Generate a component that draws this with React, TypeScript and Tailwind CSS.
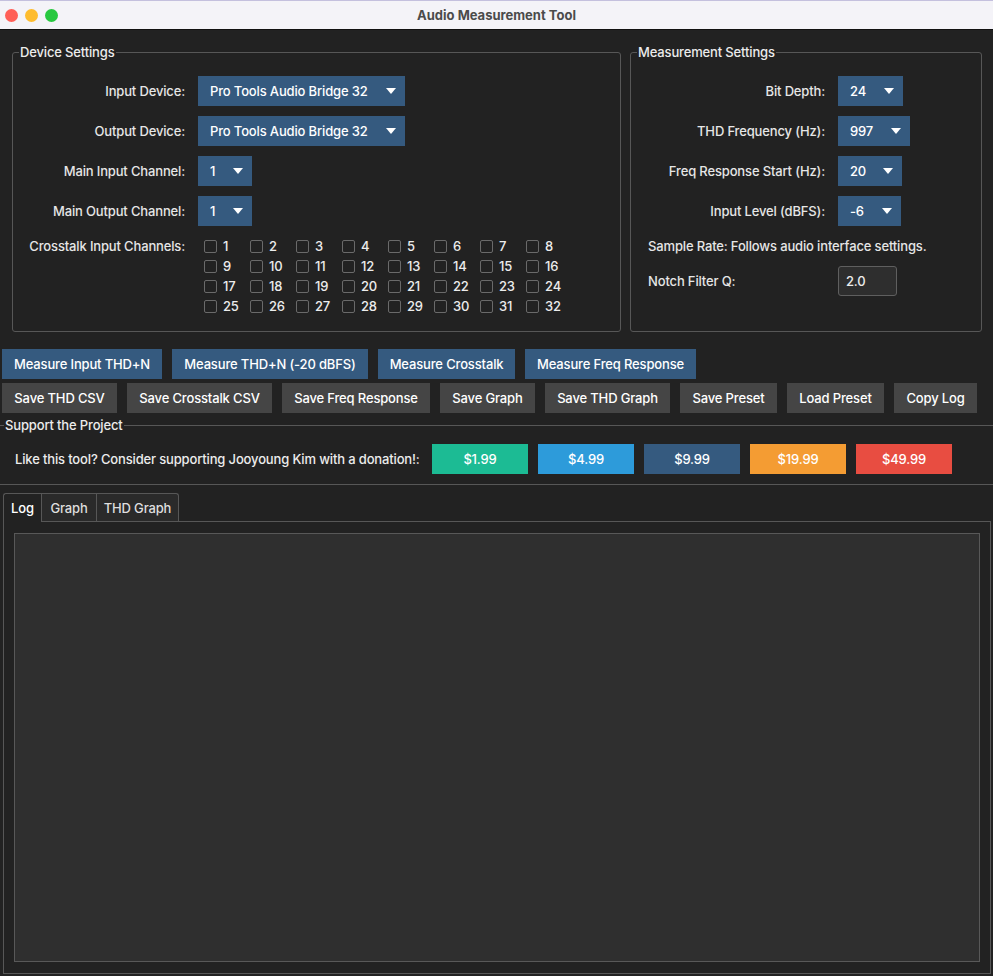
import React from 'react';

const FONT = "font-['Inter','Noto_Sans',sans-serif]";

const measureButtons = [
    { label: 'Measure Input THD+N', w: 'w-[160px]' },
    { label: 'Measure THD+N (-20 dBFS)', w: 'w-[196px]' },
    { label: 'Measure Crosstalk', w: 'w-[137px]' },
    { label: 'Measure Freq Response', w: 'w-[171px]' },
];

const fileButtons = [
    { label: 'Save THD CSV', w: 'w-[115px]' },
    { label: 'Save Crosstalk CSV', w: 'w-[145px]' },
    { label: 'Save Freq Response', w: 'w-[148px]' },
    { label: 'Save Graph', w: 'w-[95px]' },
    { label: 'Save THD Graph', w: 'w-[125px]' },
    { label: 'Save Preset', w: 'w-[97px]' },
    { label: 'Load Preset', w: 'w-[97px]' },
    { label: 'Copy Log', w: 'w-[83px]' },
];

const donations = [
    { label: '$1.99', color: 'bg-[#1cbb94]' },
    { label: '$4.99', color: 'bg-[#2d9bda]' },
    { label: '$9.99', color: 'bg-[#355a7f]' },
    { label: '$19.99', color: 'bg-[#f49c33]' },
    { label: '$49.99', color: 'bg-[#e84d41]' },
];

const Caret = () => (
    <svg width="10" height="6" viewBox="0 0 10 6" className="shrink-0">
        <polygon points="0,0 10,0 5,6" fill="#ffffff" />
    </svg>
);

const Combo = ({ value, w }: { value: string; w: string }) => (
    <div className={`h-[30px] ${w} bg-[#355a7f] text-white flex items-center justify-between pl-[12px] pr-[9px]`}>
        <span>{value}</span>
        <Caret />
    </div>
);

const Label = ({ children }: { children: React.ReactNode }) => (
    <div className="h-[30px] flex items-center justify-end text-[#e6e6e6]">{children}</div>
);

const App: React.FC = () => {
    const channels = Array.from({ length: 32 }, (_, i) => i + 1);

    return (
        <div className={`w-[993px] h-[976px] bg-[#222222] flex flex-col overflow-hidden whitespace-nowrap text-[13px] leading-[16px] font-medium tracking-[-0.15px] ${FONT}`}>
            {/* window title bar */}
            <div className="h-[30px] shrink-0 bg-[#f4f3f8] border-t border-[#c4c0de] border-b border-b-[#111111] grid grid-cols-[1fr_auto_1fr] items-center">
                <div className="flex items-center gap-[7px] pl-[5px]">
                    <span className="w-[13px] h-[13px] rounded-full bg-[#ff5f57]" />
                    <span className="w-[13px] h-[13px] rounded-full bg-[#febc2e]" />
                    <span className="w-[13px] h-[13px] rounded-full bg-[#28c840]" />
                </div>
                <div className="font-bold text-[#4b4b4b] text-[13px] tracking-normal">Audio Measurement Tool</div>
                <div />
            </div>

            {/* settings groups */}
            <div className="flex gap-[9px] pl-[12px] pt-[14px]">
                <fieldset className="w-[609px] h-[288px] border border-[#575757] rounded-[3px]">
                    <legend className="ml-[6px] px-[1px] text-[#ececec]">Device Settings</legend>
                    <div className="grid grid-cols-[172px_auto] gap-x-[13px] gap-y-[10px] pt-[16px] justify-start">
                        <Label>Input Device:</Label>
                        <Combo value="Pro Tools Audio Bridge 32" w="w-[207px]" />
                        <Label>Output Device:</Label>
                        <Combo value="Pro Tools Audio Bridge 32" w="w-[207px]" />
                        <Label>Main Input Channel:</Label>
                        <Combo value="1" w="w-[54px]" />
                        <Label>Main Output Channel:</Label>
                        <Combo value="1" w="w-[54px]" />
                        <div className="h-[20px] flex items-center justify-end text-[#e6e6e6]">Crosstalk Input Channels:</div>
                        <div className="grid grid-cols-[repeat(8,46px)] auto-rows-[20px]">
                            {channels.map((n) => (
                                <div key={n} className="flex items-center gap-[6px] pl-[6px] text-[#ececec]">
                                    <span className="w-[13px] h-[13px] border border-[#6a6a6a] rounded-[2px]" />
                                    <span>{n}</span>
                                </div>
                            ))}
                        </div>
                    </div>
                </fieldset>

                <fieldset className="w-[352px] h-[288px] border border-[#575757] rounded-[3px]">
                    <legend className="ml-[6px] px-[1px] text-[#ececec]">Measurement Settings</legend>
                    <div className="grid grid-cols-[177px_auto] gap-x-[13px] gap-y-[10px] pt-[16px] pl-[17px] justify-start">
                        <Label>Bit Depth:</Label>
                        <Combo value="24" w="w-[65px]" />
                        <Label>THD Frequency (Hz):</Label>
                        <Combo value="997" w="w-[72px]" />
                        <Label>Freq Response Start (Hz):</Label>
                        <Combo value="20" w="w-[64px]" />
                        <Label>Input Level (dBFS):</Label>
                        <Combo value="-6" w="w-[63px]" />
                        <div className="col-span-2 h-[20px] flex items-center text-[#e6e6e6]">
                            Sample Rate: Follows audio interface settings.
                        </div>
                        <div className="h-[30px] flex items-center text-[#e6e6e6]">Notch Filter Q:</div>
                        <div className="h-[30px] w-[59px] bg-[#2e2e2e] border border-[#5f5f5f] rounded-[3px] flex items-center pl-[7px] text-[#ececec]">
                            2.0
                        </div>
                    </div>
                </fieldset>
            </div>

            {/* action buttons */}
            <div className="flex flex-col gap-[4px] px-[2px] mt-[17px]">
                <div className="flex gap-[10px]">
                    {measureButtons.map((b) => (
                        <button key={b.label} className={`h-[30px] ${b.w} bg-[#355a7f] text-white flex items-center justify-center`}>
                            {b.label}
                        </button>
                    ))}
                </div>
                <div className="flex gap-[10px]">
                    {fileButtons.map((b) => (
                        <button key={b.label} className={`h-[30px] ${b.w} bg-[#454545] text-white flex items-center justify-center`}>
                            {b.label}
                        </button>
                    ))}
                </div>
            </div>

            {/* support */}
            <fieldset className="mt-[4px] border-t border-b border-[#575757]">
                <legend className="ml-[4px] px-[1px] text-[#ececec]">Support the Project</legend>
                <div className="flex items-center gap-[10px] pl-[15px] pt-[11px] pb-[10px]">
                    <span className="w-[407px] text-[#ececec]">Like this tool? Consider supporting Jooyoung Kim with a donation!:</span>
                    {donations.map((d) => (
                        <button key={d.label} className={`h-[30px] w-[96px] ${d.color} text-white flex items-center justify-center`}>
                            {d.label}
                        </button>
                    ))}
                </div>
            </fieldset>

            {/* tabs */}
            <div className="mt-[8px] ml-[3px] flex h-[28px] shrink-0">
                <div className="relative z-10 w-[38px] h-[29px] bg-[#222222] border-l border-t border-[#575757] rounded-tl-[3px] flex items-center justify-center pb-[1px] text-white">
                    Log
                </div>
                <div className="w-[55px] h-[28px] bg-[#2a2a2a] border-l border-t border-[#575757] flex items-center justify-center text-[#dedede]">
                    Graph
                </div>
                <div className="w-[83px] h-[28px] bg-[#2a2a2a] border-l border-t border-r border-[#575757] rounded-tr-[3px] flex items-center justify-center text-[#dedede]">
                    THD Graph
                </div>
            </div>
            <div className="flex-1 ml-[3px] w-[988px] mb-[2px] border border-[#575757] bg-[#222222] flex">
                <div className="flex-1 mx-[10px] my-[11px] bg-[#2f2f2f] border border-[#585858]" />
            </div>
        </div>
    );
};

export default App;
